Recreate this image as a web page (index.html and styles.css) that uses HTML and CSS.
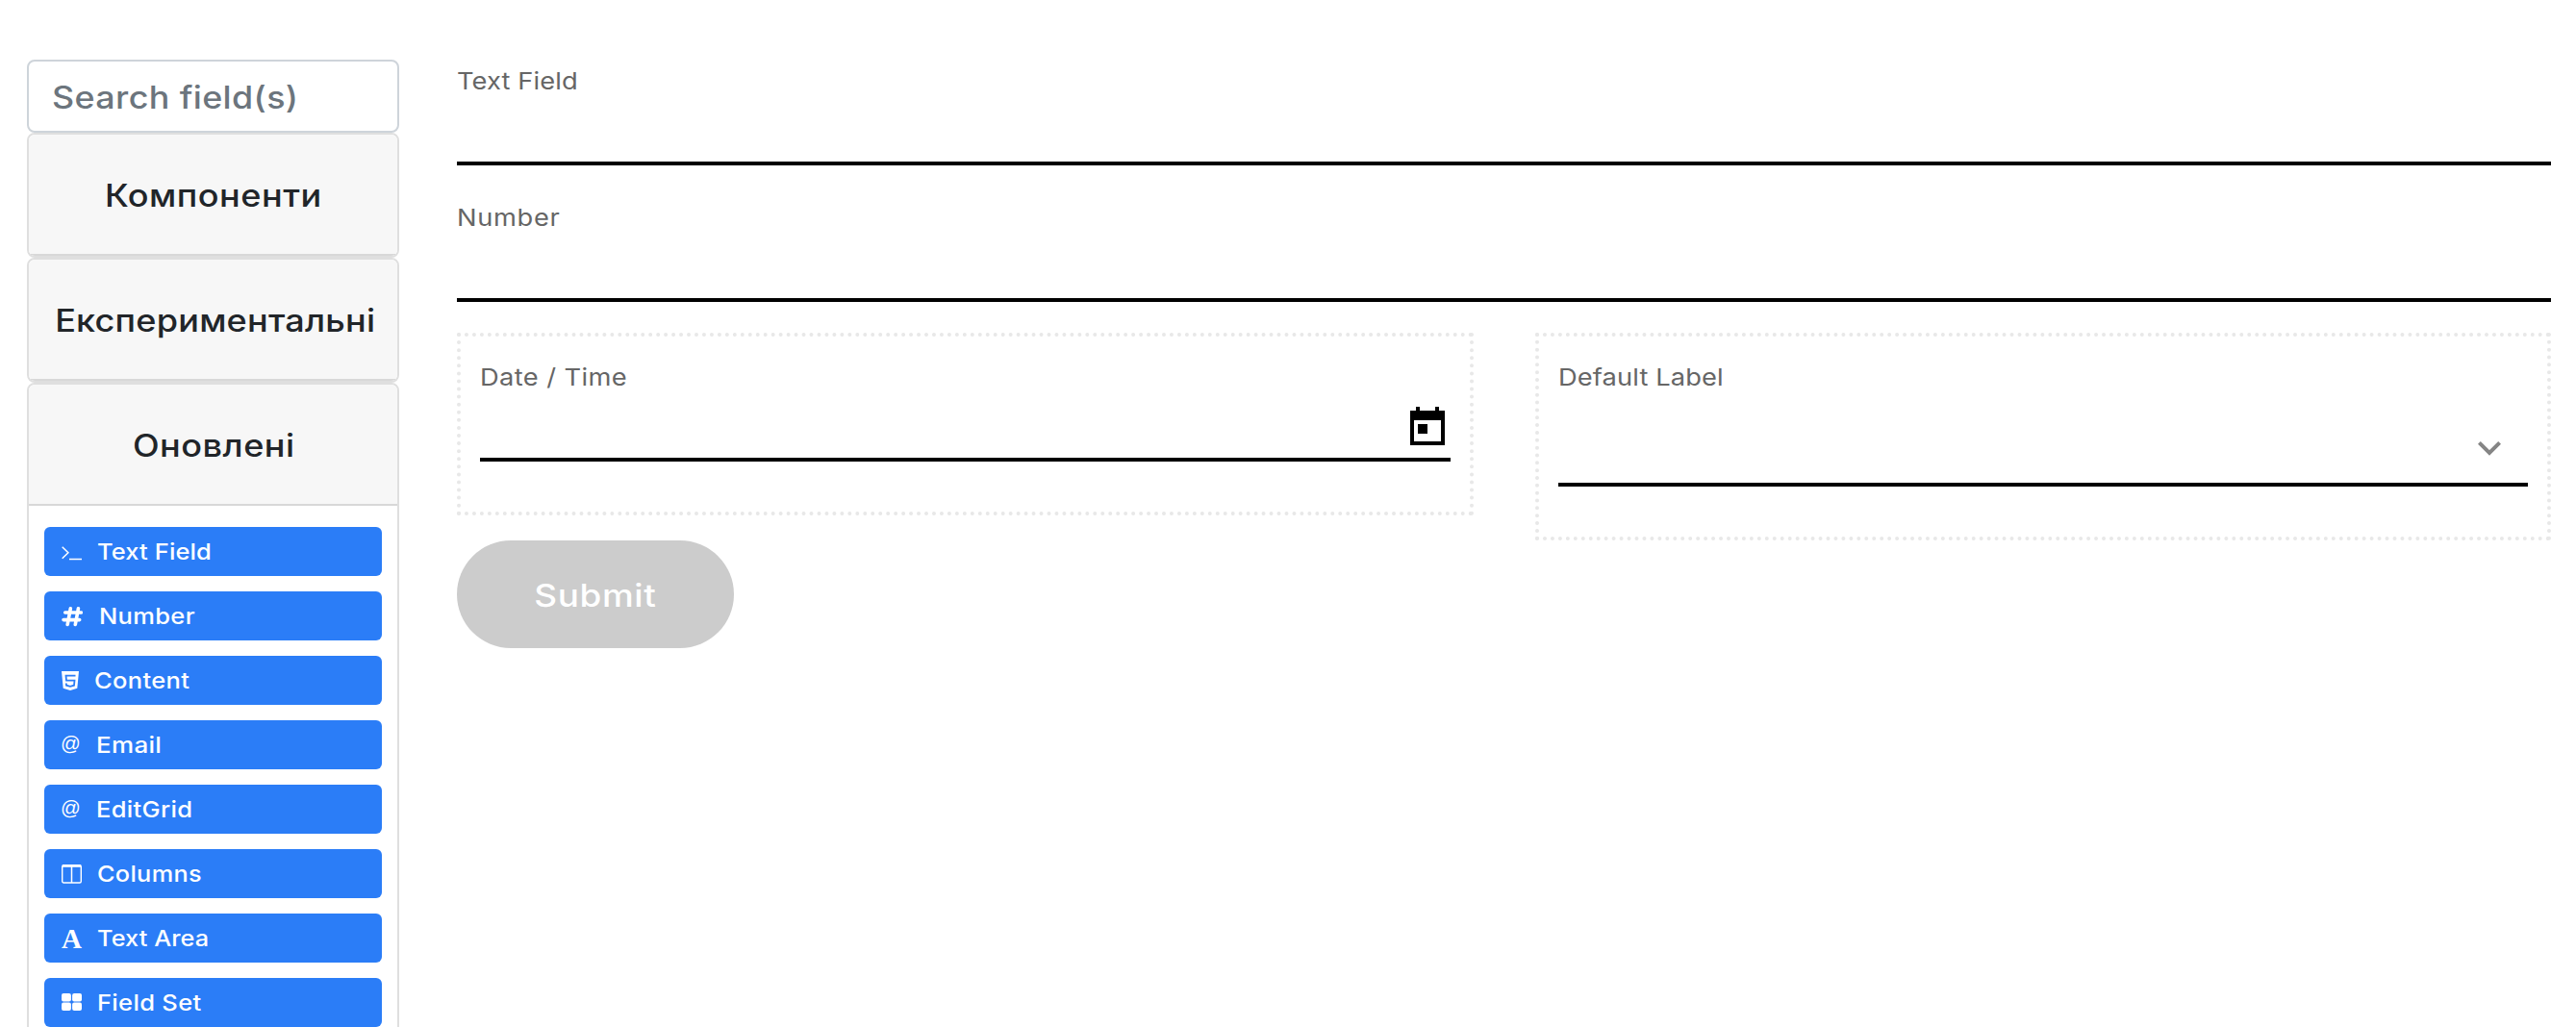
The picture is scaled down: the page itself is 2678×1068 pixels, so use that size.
FILE: index.html
```html
<!DOCTYPE html>
<html lang="uk">
<head>
<meta charset="utf-8">
<title>Form builder</title>
<link rel="stylesheet" href="styles.css">
</head>
<body>
<div class="builder">
  <aside class="sidebar">
    <div class="search" role="searchbox"><span>Search field(s)</span></div>
    <section class="card"><h2 class="card-header"><span>Компоненти</span></h2></section>
    <section class="card"><h2 class="card-header experimental"><span>Експериментальні</span></h2></section>
    <section class="card open">
      <h2 class="card-header"><span>Оновлені</span></h2>
      <div class="card-body">
        <div class="item text-field"><svg class="icon" viewBox="0 0 22 22"><path d="M.7 5.700l6.200 6-6.200 6M8 18.400h13" fill="none" stroke="#fff" stroke-width="1.500"/></svg><span>Text Field</span></div>
        <div class="item number"><svg class="icon" viewBox="0 0 22 22"><path d="M9.300 2.800L6.200 19.500M17.400 2.800L14.300 19.500M3.700 7h16.700M2 14.600h16.700" fill="none" stroke="#fff" stroke-width="3.600" stroke-linecap="round"/></svg><span>Number</span></div>
        <div class="item content"><svg class="icon" viewBox="0 0 22 22"><path d="M0 1h18l-1.700 17.700L9 21l-7.300-2.300z" fill="#fff"/><path d="M14.500 5.700H4.500l.5 5h8.500l-.5 5-4 1.200-4-1.200-.2-2.200" fill="none" stroke="#2b7df7" stroke-width="1.800"/></svg><span>Content</span></div>
        <div class="item email"><i class="icon at">@</i><span>Email</span></div>
        <div class="item editgrid"><i class="icon at">@</i><span>EditGrid</span></div>
        <div class="item columns"><svg class="icon" viewBox="0 0 22 22"><rect x=".7" y="1.700" width="19.600" height="18.300" rx="1.500" fill="none" stroke="#fff" stroke-width="1.400"/><path d="M10.500 3v17" fill="none" stroke="#fff" stroke-width="1.500"/><path d="M1 2.500h19" stroke="#fff" stroke-width="2.600"/></svg><span>Columns</span></div>
        <div class="item text-area"><i class="icon letter">A</i><span>Text Area</span></div>
        <div class="item field-set"><svg class="icon" viewBox="0 0 22 22" fill="#fff"><rect x="0" y="1" width="9.900" height="8.400" rx="2"/><rect x="11.100" y="1" width="9.900" height="8.400" rx="2"/><rect x="0" y="10.600" width="9.900" height="8.400" rx="2"/><rect x="11.100" y="10.600" width="9.900" height="8.400" rx="2"/></svg><span>Field Set</span></div>
      </div>
    </section>
  </aside>
  <main class="form">
    <div class="field"><label><span>Text Field</span></label><div class="control"></div></div>
    <div class="field"><label class="wide"><span>Number</span></label><div class="control"></div></div>
    <div class="row">
      <div class="col">
        <label class="date-label"><span>Date / Time</span></label>
        <div class="control date"><svg class="calendar" viewBox="0 0 36 40"><path d="M0 4h6V0h4v4h16V0h4v4h6v36H0zM4 14v22h28V14z" fill="#000" fill-rule="evenodd"/><path d="M8 18h10v10H8z"/></svg></div>
      </div>
      <div class="col">
        <label><span>Default Label</span></label>
        <div class="control select"><svg class="chevron" viewBox="0 0 24 15"><path d="M1.400 1.400L12 12l10.600-10.600" fill="none" stroke="#858585" stroke-width="4"/></svg></div>
      </div>
    </div>
    <button class="submit" disabled><span>Submit</span></button>
  </main>
</div>
</body>
</html>
```
FILE: styles.css
```css
* { box-sizing: border-box; }
body {
  margin: 0;
  height: 1068px;
  overflow: hidden;
  background: #fff;
  font-family: Inter, "Liberation Sans", sans-serif;
  color: #212529;
}
/* Widened letterforms: --stretch is the horizontal scale of a text run. */
span {
  display: inline-block;
  transform: scaleX(var(--stretch, 1.12));
  transform-origin: left center;
}
.builder {
  display: flex;
  align-items: flex-start;
  gap: 60px;
  padding: 62px 26px 0 28px;
}
.sidebar {
  display: flex;
  flex-direction: column;
  flex: none;
  width: 387px;
}
.search {
  display: flex;
  align-items: center;
  height: 76px;
  padding: 2px 24px 0;
  border: 2px solid #ced4da;
  border-radius: 8px;
  background: #fff;
  color: #6c757d;
  font-size: 32px;
  font-weight: 500;
  letter-spacing: .35px;
  white-space: nowrap;
}
.card {
  height: 130px;
  border: 2px solid #dfdfdf;
  border-radius: 8px;
  background: #fff;
  overflow: hidden;
}
.card.open { height: auto; border-radius: 8px 8px 0 0; }
.card-header {
  display: flex;
  align-items: center;
  justify-content: center;
  height: 126px;
  margin: 0;
  padding: 2px 0 0 1px;
  border-bottom: 2px solid #d8d8d8;
  background: #f7f7f7;
  font-size: 32.2px;
  font-weight: 500;
  letter-spacing: .45px;
  white-space: nowrap;
}
.card-header span { transform-origin: center; }
.experimental { padding-left: 5px; letter-spacing: .2px; }
.card-body {
  display: flex;
  flex-direction: column;
  gap: 16px;
  padding: 22px 16px;
}
.item {
  --stretch: 1.09;
  display: flex;
  align-items: center;
  height: 51px;
  padding-left: 18px;
  border-radius: 6px;
  background: #2b7df7;
  color: #fff;
  font-size: 23.400px;
  font-weight: 500;
  letter-spacing: .3px;
  white-space: nowrap;
}
.icon {
  flex: none;
  width: 22px;
  height: 22px;
  margin: 1px 15px 0 0;
  font-style: normal;
  letter-spacing: 0;
}
.at { font: 20.500px/18px "Liberation Sans", sans-serif; text-indent: -1px; }
.letter { font: bold 29px/22px "Liberation Serif", serif; }
.number .icon { margin-right: 17px; }
.content .icon { margin-right: 12px; }
.email { --stretch: 1.11; }
.columns, .text-area { --stretch: 1.08; }
.text-field, .text-area { letter-spacing: .1px; }
.email .icon, .editgrid .icon { margin-right: 14px; }
.form { flex: 1; min-width: 0; }
.field { height: 142px; padding-top: 4px; }
label {
  --stretch: 1.105;
  display: block;
  height: 36px;
  line-height: 36px;
  font-size: 24.700px;
  letter-spacing: .1px;
  color: #666;
}
.wide { letter-spacing: .6px; }
.date-label { letter-spacing: .35px; }
.control { height: 70px; border-bottom: 4px solid #000; }
.row {
  display: grid;
  grid-template-columns: 1057px 1056px;
  justify-content: space-between;
  align-items: start;
  height: 216px;
}
.col {
  padding: 24px 20px 52px;
  border: 4px dotted #e8e8e8;
}
.control.date {
  display: flex;
  justify-content: flex-end;
  padding: 13px 6px 0 0;
}
.calendar { width: 36px; height: 40px; }
.control.select {
  display: flex;
  justify-content: flex-end;
  height: 96px;
  padding: 49px 28px 0 0;
}
.chevron { width: 24px; height: 15px; }
.submit {
  display: block;
  width: 288px;
  height: 112px;
  padding: 1px 0 0;
  border: 0;
  border-radius: 56px;
  background: #ccc;
  color: #fff;
  font: 500 32.900px Inter, sans-serif;
  letter-spacing: .6px;
}
.submit span { transform-origin: center; }
```
